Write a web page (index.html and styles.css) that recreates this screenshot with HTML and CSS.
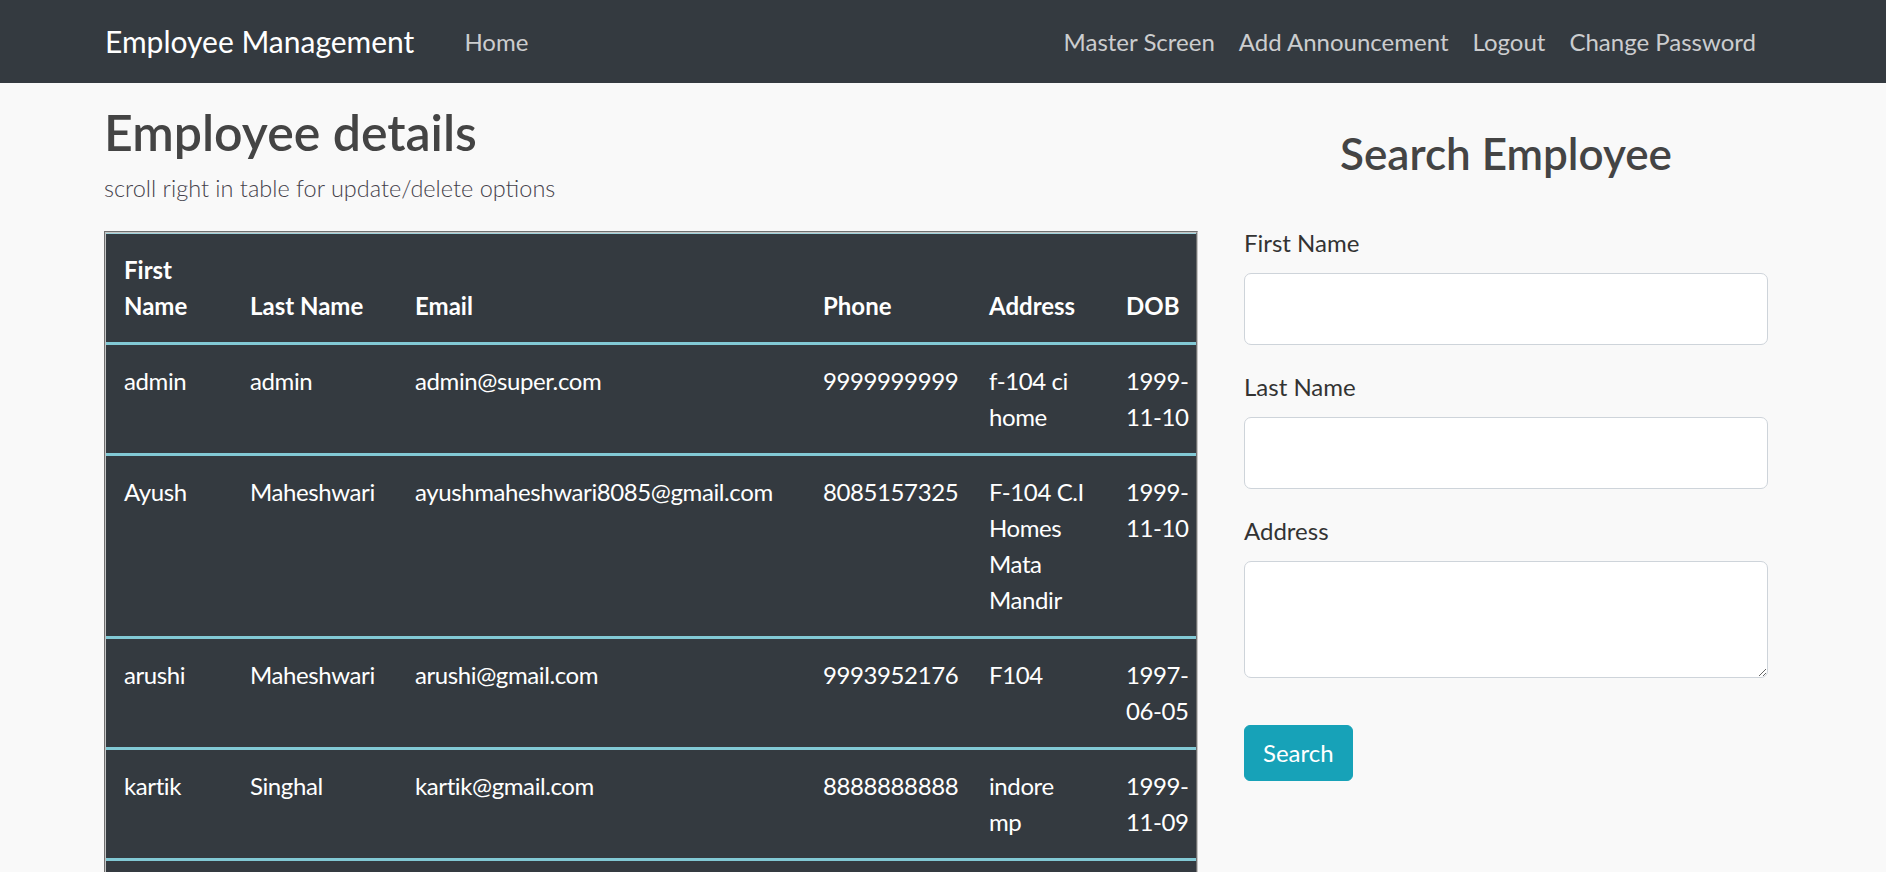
FILE: index.html
```html
<!DOCTYPE html>
<html lang="en">
<head>
<meta charset="utf-8">
<title>Employee Management</title>
<link rel="stylesheet" href="styles.css">
</head>
<body>
<nav class="navbar">
  <div class="container nav-inner">
    <a class="brand" href="#">Employee Management</a>
    <ul class="nav">
      <li><a class="nav-link" href="#">Home</a></li>
    </ul>
    <ul class="nav nav-right">
      <li><a class="nav-link" href="#">Master Screen</a></li>
      <li><a class="nav-link" href="#">Add Announcement</a></li>
      <li><a class="nav-link" href="#">Logout</a></li>
      <li><a class="nav-link" href="#">Change Password</a></li>
    </ul>
  </div>
</nav>

<main class="container page">
  <section class="employees">
    <h1 class="title">Employee details</h1>
    <p class="lead">scroll right in table for update/delete options</p>
    <div class="table-wrap">
      <table class="emp-table">
        <colgroup>
          <col class="w-first">
          <col class="w-last">
          <col class="w-email">
          <col class="w-phone">
          <col class="w-address">
          <col class="w-dob">
          <col class="w-action">
          <col class="w-action">
        </colgroup>
        <thead>
          <tr>
            <th>First Name</th>
            <th>Last Name</th>
            <th>Email</th>
            <th>Phone</th>
            <th>Address</th>
            <th>DOB</th>
            <th>Update</th>
            <th>Delete</th>
          </tr>
        </thead>
        <tbody>
          <tr>
            <td>admin</td>
            <td>admin</td>
            <td>admin@super.com</td>
            <td>9999999999</td>
            <td>f-104 ci home</td>
            <td>1999-11-10</td>
            <td><a class="act act-update" href="#">Update</a></td>
            <td><a class="act act-delete" href="#">Delete</a></td>
          </tr>
          <tr>
            <td>Ayush</td>
            <td>Maheshwari</td>
            <td>ayushmaheshwari8085@gmail.com</td>
            <td>8085157325</td>
            <td>F-104 C.I Homes Mata Mandir</td>
            <td>1999-11-10</td>
            <td><a class="act act-update" href="#">Update</a></td>
            <td><a class="act act-delete" href="#">Delete</a></td>
          </tr>
          <tr>
            <td>arushi</td>
            <td>Maheshwari</td>
            <td>arushi@gmail.com</td>
            <td>9993952176</td>
            <td>F104</td>
            <td>1997-06-05</td>
            <td><a class="act act-update" href="#">Update</a></td>
            <td><a class="act act-delete" href="#">Delete</a></td>
          </tr>
          <tr>
            <td>kartik</td>
            <td>Singhal</td>
            <td>kartik@gmail.com</td>
            <td>8888888888</td>
            <td>indore mp</td>
            <td>1999-11-09</td>
            <td><a class="act act-update" href="#">Update</a></td>
            <td><a class="act act-delete" href="#">Delete</a></td>
          </tr>
          <tr>
            <td>ritika</td>
            <td>Sharma</td>
            <td>ritika@gmail.com</td>
            <td>7777777777</td>
            <td>bhopal mp</td>
            <td>1998-02-14</td>
            <td><a class="act act-update" href="#">Update</a></td>
            <td><a class="act act-delete" href="#">Delete</a></td>
          </tr>
        </tbody>
      </table>
    </div>
  </section>

  <aside class="search">
    <h2 class="search-title">Search Employee</h2>
    <form class="search-form">
      <div class="form-group">
        <label for="first-name">First Name</label>
        <input id="first-name" class="form-control" type="text">
      </div>
      <div class="form-group">
        <label for="last-name">Last Name</label>
        <input id="last-name" class="form-control" type="text">
      </div>
      <div class="form-group">
        <label for="address">Address</label>
        <textarea id="address" class="form-control form-textarea"></textarea>
      </div>
      <button class="btn-search" type="button">Search</button>
    </form>
  </aside>
</main>
</body>
</html>
```

FILE: styles.css
```css
* {
  box-sizing: border-box;
}

html, body {
  margin: 0;
  padding: 0;
}

body {
  background: #f9f9f9;
  color: #333;
  font-family: Lato, "Open Sans", sans-serif;
  font-size: 24px;
  line-height: 1.5;
}

a {
  text-decoration: none;
}

.container {
  margin-left: 82px;
  width: 1708px;
  padding: 0 22px;
}

/* ---------- navbar ---------- */
.navbar {
  background: #343a40;
  height: 83px;
}

.nav-inner {
  display: flex;
  align-items: center;
  height: 83px;
}

.brand {
  color: #fff;
  font-size: 30px;
  line-height: 45px;
  margin-right: 38px;
  padding-left: 1px;
}

.nav {
  list-style: none;
  margin: 0;
  padding: 0;
  display: flex;
}

.nav-right {
  margin-left: auto;
}

.nav-link {
  display: block;
  padding: 0 12px;
  color: rgba(255, 255, 255, 0.75);
  font-size: 24px;
  line-height: 36px;
}

/* ---------- page ---------- */
.page {
  display: grid;
  grid-template-columns: 1094px 524px;
  column-gap: 46px;
  align-items: start;
}

.title {
  margin: 19px 0 7px;
  font-size: 50px;
  line-height: 60px;
  font-weight: 600;
  color: #444;
}

.lead {
  margin: 0 0 23px;
  font-size: 23.5px;
  line-height: 39px;
  font-weight: 300;
  color: #45424b;
}

/* ---------- table ---------- */
.table-wrap {
  border: 2px groove #c4c4c4;
  overflow: hidden;
  background: #343a40;
}

.emp-table {
  table-layout: fixed;
  border-collapse: separate;
  border-spacing: 0;
  width: 1342px;
  background: #343a40;
  color: #fff;
}

.w-first { width: 126px; }
.w-last { width: 165px; }
.w-email { width: 408px; }
.w-phone { width: 166px; }
.w-address { width: 137px; }
.w-dob { width: 110px; }
.w-action { width: 115px; }

.emp-table th,
.emp-table td {
  padding: 18px;
  text-align: left;
  font-size: 24px;
  line-height: 36px;
}

.emp-table th {
  font-weight: 700;
  vertical-align: bottom;
  border-top: 1px solid #9fd3dc;
  border-bottom: 3px solid #82c9d5;
}

.emp-table td {
  font-weight: 400;
  vertical-align: top;
  letter-spacing: -0.4px;
  border-bottom: 3px solid #82c9d5;
}

.act {
  display: inline-block;
  padding: 0 12px;
  border-radius: 6px;
  color: #fff;
}

.act-update { background: #ffc107; color: #212529; }
.act-delete { background: #dc3545; }

/* ---------- search ---------- */
.search-title {
  margin: 44px 0 45px;
  text-align: center;
  font-size: 44px;
  line-height: 53px;
  font-weight: 600;
  color: #444;
}

.form-group {
  margin-bottom: 24px;
}

.form-group label {
  display: block;
  margin-bottom: 12px;
  font-size: 24px;
  line-height: 36px;
  color: #333;
}

.form-control {
  display: block;
  width: 100%;
  height: 72px;
  padding: 12px 24px;
  font-family: inherit;
  font-size: 30px;
  color: #495057;
  background: #fff;
  border: 1px solid #ced4da;
  border-radius: 7px;
}

.form-textarea {
  height: 117px;
  resize: vertical;
}

.btn-search {
  margin-top: 23px;
  height: 56px;
  padding: 0 18px;
  font-family: inherit;
  font-size: 24px;
  line-height: 36px;
  color: #fff;
  background: #17a2b8;
  border: 1px solid #17a2b8;
  border-radius: 6px;
}
```
